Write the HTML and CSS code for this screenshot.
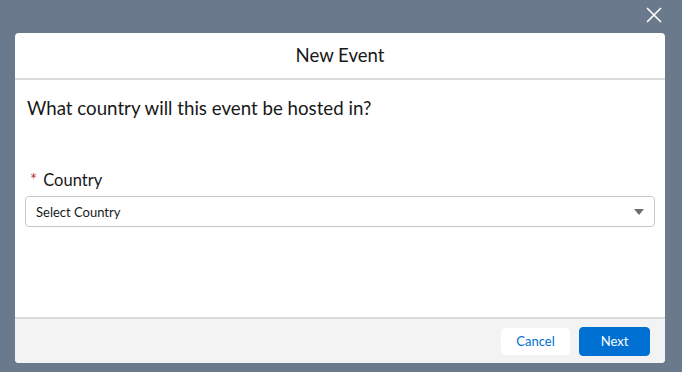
FILE: index.html
```html
<!DOCTYPE html>
<html>
<head>
<meta charset="utf-8">
<link rel="stylesheet" href="styles.css">
</head>
<body>
<div class="backdrop">
  <button class="close" aria-label="Close">
    <svg width="16" height="16" viewBox="0 0 16 16"><path d="M1 1L15 15M15 1L1 15" stroke="#fff" stroke-width="1.6" fill="none"/></svg>
  </button>
  <div class="modal">
    <div class="header">New Event</div>
    <div class="body">
      <p class="question">What country will this event be hosted in?</p>
      <div class="field">
        <label class="label"><span class="req">*</span> Country</label>
        <div class="select">
          <span>Select Country</span>
          <svg width="10" height="6" viewBox="0 0 10 6"><path d="M0 0H10L5 6Z" fill="#706e6b"/></svg>
        </div>
      </div>
    </div>
    <div class="footer">
      <button class="btn cancel">Cancel</button>
      <button class="btn next">Next</button>
    </div>
  </div>
</div>
</body>
</html>
```
FILE: styles.css
```css
* { box-sizing: border-box; }
html, body { margin: 0; padding: 0; }
body {
  width: 682px;
  height: 372px;
  background: #6b798c;
  font-family: "Lato", "Open Sans", sans-serif;
  color: #181818;
  overflow: hidden;
}
.backdrop {
  position: relative;
  padding: 33px 17px 9px 15px;
  height: 372px;
}
.close {
  position: absolute;
  top: 7px;
  right: 20px;
  width: 16px;
  height: 16px;
  padding: 0;
  border: 0;
  background: none;
  display: flex;
}
.modal {
  width: 650px;
  height: 330px;
  background: #fff;
  border-radius: 4px;
  display: flex;
  flex-direction: column;
  overflow: hidden;
}
.header {
  height: 47px;
  border-bottom: 2px solid #dddbda;
  display: flex;
  align-items: center;
  justify-content: center;
  font-size: 18.6px;
  padding-bottom: 2px;
}
.body {
  flex: 1;
  padding: 16px 10px 0 10px;
}
.question {
  margin: 0 0 0 2px;
  font-size: 18.7px;
  line-height: 24px;
}
.field { margin-top: 50px; }
.label {
  display: block;
  font-size: 16.5px;
  line-height: 20px;
  margin-left: 5px;
  margin-bottom: 6px;
}
.req { color: #c23934; margin-right: 2px; }
.select {
  height: 31px;
  border: 1px solid #c9c7c5;
  border-radius: 4px;
  display: flex;
  align-items: center;
  justify-content: space-between;
  padding: 0 10px 0 10px;
  font-size: 13px;
}
.footer {
  height: 46px;
  background: #f3f3f3;
  border-top: 2px solid #dddbda;
  display: flex;
  align-items: center;
  justify-content: flex-end;
  gap: 9px;
  padding-right: 15px;
}
.btn {
  font-family: inherit;
  font-size: 13px;
  border-radius: 4px;
  cursor: pointer;
}
.cancel {
  width: 69px;
  height: 27px;
  background: #fff;
  border: 1px solid #fff;
  color: #0070d2;
}
.next {
  width: 71px;
  height: 29px;
  background: #0070d2;
  border: 1px solid #0070d2;
  color: #fff;
}
```
